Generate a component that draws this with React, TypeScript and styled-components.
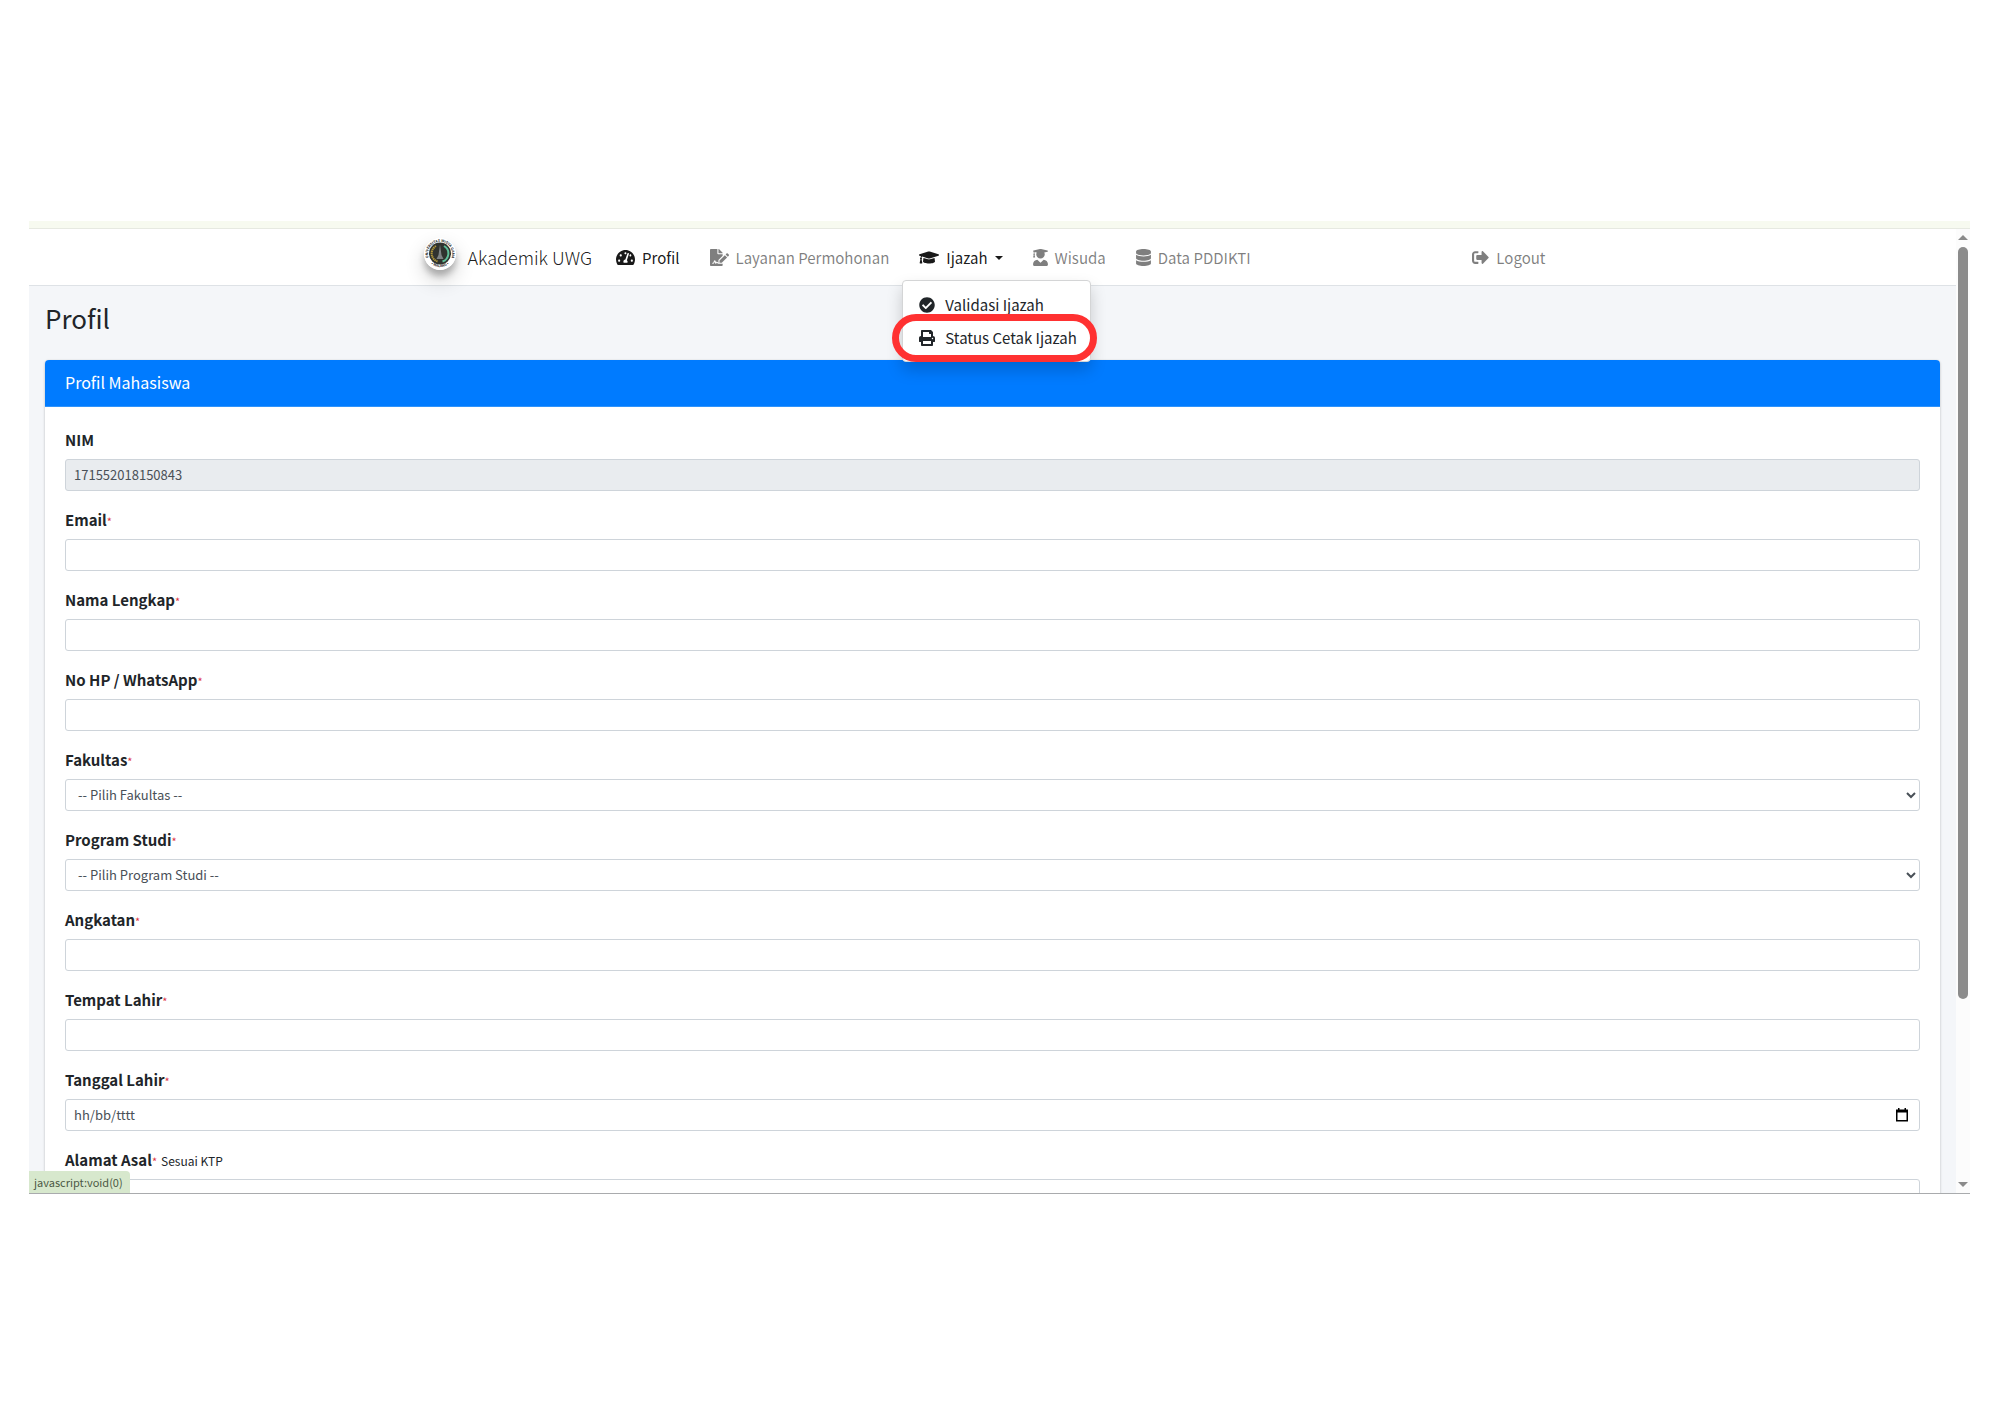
import React from "react";
import styled, { createGlobalStyle, css } from "styled-components";
import {
  FaTachometerAlt,
  FaFileSignature,
  FaGraduationCap,
  FaUserGraduate,
  FaDatabase,
  FaSignOutAlt,
  FaCheckCircle,
  FaPrint,
} from "react-icons/fa";

const GlobalStyle = createGlobalStyle`
  *, *::before, *::after { box-sizing: border-box; }
  body {
    margin: 0;
    background: #fff;
    color: #212529;
    font-family: "Noto Sans CJK JP", "Noto Sans", sans-serif;
    font-size: 15px;
    line-height: 24px;
  }
`;

const Screen = styled.div`
  display: flex;
  flex-direction: column;
  height: 100vh;
  padding: 221px 30px 220px 29px;
`;

const BrowserWindow = styled.div`
  position: relative;
  flex: 1;
  min-height: 0;
  display: flex;
  flex-direction: column;
  border-bottom: 1px solid #a9abad;
`;

const TabStrip = styled.div`
  flex: none;
  height: 8px;
  background: #f7faf0;
  border-bottom: 1px solid #e6e9e1;
`;

const Viewport = styled.div`
  flex: 1;
  min-height: 0;
  display: flex;
`;

const Page = styled.div`
  flex: 1;
  min-width: 0;
  overflow: hidden;
  background: #f4f6f9;
`;

const ScrollTrack = styled.div`
  flex: none;
  width: 14px;
  padding: 6px 0;
  display: flex;
  flex-direction: column;
  align-items: center;
  gap: 7px;
  background: #fcfcfc;
`;

const ScrollArrow = styled.span<{ $down?: boolean }>`
  border: 5px solid transparent;
  ${(p) =>
    p.$down
      ? css`border-top-color: #8b8b8b; border-bottom: 0; margin-top: auto;`
      : css`border-bottom-color: #8b8b8b; border-top: 0;`}
`;

const ScrollThumb = styled.span`
  width: 10px;
  height: 79%;
  border-radius: 5px;
  background: #8b8b8b;
`;

const Navbar = styled.header`
  height: 57px;
  background: #fff;
  border-bottom: 1px solid #dee2e6;
`;

const NavContainer = styled.div`
  max-width: 1162px;
  height: 100%;
  margin: 0 auto;
  padding: 0 28px 0 12px;
  display: flex;
  align-items: center;
`;

const Brand = styled.a`
  display: flex;
  align-items: center;
  gap: 12px;
  margin-right: 24px;
  color: rgba(0, 0, 0, 0.9);
  font-size: 18px;
  font-weight: 300;
  text-decoration: none;
`;

const LogoMark = styled.svg`
  width: 32px;
  height: 32px;
  margin-bottom: 6px;
  border-radius: 50%;
  box-shadow: 0 10px 20px rgba(0, 0, 0, 0.19), 0 6px 6px rgba(0, 0, 0, 0.23);
`;

const NavList = styled.nav`
  flex: 1;
  display: flex;
  align-items: center;
  gap: 30px;
  padding-top: 1px;
`;

const NavLink = styled.a<{ $icon: number; $active?: boolean; $end?: boolean }>`
  display: flex;
  align-items: center;
  gap: 7px;
  color: ${(p) => (p.$active ? "rgba(0, 0, 0, 0.9)" : "rgba(0, 0, 0, 0.5)")};
  text-decoration: none;
  white-space: nowrap;
  ${(p) => p.$end && css`margin-left: auto;`}
  svg { flex: none; width: ${(p) => p.$icon}px; height: 17px; }
`;

const Caret = styled.span`
  border: 4px solid transparent;
  border-top-color: currentColor;
  border-bottom: 0;
`;

const Dropdown = styled.div`
  position: relative;
`;

const Menu = styled.div`
  position: absolute;
  z-index: 2;
  top: 34px;
  left: -17px;
  width: 189px;
  padding: 8px 0 6px;
  background: #fff;
  border: 1px solid #d4d5d6;
  border-radius: 4px;
  box-shadow: 0 8px 16px rgba(0, 0, 0, 0.18);
`;

const MenuItem = styled.a`
  display: flex;
  align-items: center;
  gap: 10px;
  height: 33px;
  padding: 0 16px;
  color: #212529;
  text-decoration: none;
  white-space: nowrap;
  svg { flex: none; width: 16px; height: 16px; }
`;

const Highlight = styled.span`
  position: absolute;
  inset: 33px -7px -1px -11px;
  border: 7px solid #ff3131;
  border-radius: 24px;
  pointer-events: none;
`;

const Content = styled.main`
  padding: 14px 16px;
`;

const PageTitle = styled.h1`
  margin: 0 0 24px;
  font-size: 26px;
  font-weight: 400;
  line-height: 36px;
`;

const Card = styled.section`
  background: #fff;
  border-radius: 4px;
  box-shadow: 0 0 1px rgba(0, 0, 0, 0.13), 0 1px 3px rgba(0, 0, 0, 0.2);
`;

const CardHeader = styled.div`
  padding: 11px 20px 13px;
  background: #007bff;
  border-bottom: 1px solid #2f93fb;
  border-radius: 4px 4px 0 0;
`;

const CardTitle = styled.h2`
  margin: 0;
  color: #fff;
  font-size: 16px;
  font-weight: 400;
  line-height: 22px;
`;

const Form = styled.form`
  padding: 21px 20px;
`;

const Field = styled.div`
  margin-bottom: 17px;
`;

const FieldHead = styled.div`
  display: flex;
  align-items: baseline;
  height: 24px;
  margin-bottom: 7px;
`;

const Label = styled.label`
  font-weight: 700;
`;

const Required = styled.small`
  color: #dc3545;
  font-size: 11px;
  font-weight: 400;
`;

const Hint = styled.small`
  margin-left: 4px;
  font-size: 12px;
`;

const control = css`
  display: block;
  width: 100%;
  height: 32px;
  padding: 0 8px 2px;
  border: 1px solid #ced4da;
  border-radius: 3px;
  background: #fff;
  color: #495057;
  font-family: inherit;
  font-size: 13px;
`;

const TextInput = styled.input`
  ${control}
  &:disabled { background: #e9ecef; opacity: 1; }
  &::placeholder { color: #495057; opacity: 1; }
`;

const Select = styled.select`
  ${control}
`;

const DateBox = styled.div`
  position: relative;
`;

const DateButton = styled.button`
  position: absolute;
  top: 0;
  right: 8px;
  width: 20px;
  height: 100%;
  padding: 0;
  display: grid;
  place-items: center;
  border: 0;
  background: none;
  color: #000;
`;

const StatusBubble = styled.div`
  position: absolute;
  z-index: 3;
  left: 0;
  bottom: 0;
  height: 22px;
  padding: 0 7px 0 5px;
  background: #d7e8cd;
  border-radius: 0 4px 0 0;
  color: #4c5945;
  font-size: 11px;
  line-height: 22px;
`;

const Logo = () => (
  <LogoMark viewBox="0 0 64 64" aria-hidden="true">
    <defs>
      <path id="ring" d="M17.5 51 A24 24 0 1 1 46.5 51" />
      <path id="foot" d="M8 46 A30 30 0 0 0 56 46" />
    </defs>
    <circle cx="32" cy="32" r="32" fill="#fff" />
    <text fontSize="7" fontWeight="700" fill="#222">
      <textPath href="#ring" startOffset="50%" textAnchor="middle">UNIVERSITAS WIDYA GAMA</textPath>
    </text>
    <text fontSize="7" fontWeight="700" fill="#222">
      <textPath href="#foot" startOffset="50%" textAnchor="middle">• MALANG •</textPath>
    </text>
    <circle cx="32" cy="31" r="22" fill="#30332f" />
    <path d="M24 16 A17 17 0 0 0 27 47" fill="none" stroke="#b0963a" strokeWidth="4" strokeDasharray="3 1" />
    <path d="M40 16 A17 17 0 0 1 37 47" fill="none" stroke="#5fc09a" strokeWidth="4" />
    <path d="M32 13 L35 34 L39 42 H25 L29 34 Z" fill="#7d8284" />
  </LogoMark>
);

type FieldSpec = {
  id: string;
  label: string;
  kind?: "text" | "select" | "date";
  optional?: boolean;
  value?: string;
  hint?: string;
};

const fields: FieldSpec[] = [
  { id: "nim", label: "NIM", optional: true, value: "171552018150843" },
  { id: "email", label: "Email" },
  { id: "nama", label: "Nama Lengkap" },
  { id: "hp", label: "No HP / WhatsApp" },
  { id: "fakultas", label: "Fakultas", kind: "select", value: "-- Pilih Fakultas --" },
  { id: "prodi", label: "Program Studi", kind: "select", value: "-- Pilih Program Studi --" },
  { id: "angkatan", label: "Angkatan" },
  { id: "tempat", label: "Tempat Lahir" },
  { id: "tanggal", label: "Tanggal Lahir", kind: "date" },
  { id: "alamat", label: "Alamat Asal", hint: "Sesuai KTP" },
];

const Control = ({ field }: { field: FieldSpec }) => {
  if (field.kind === "select") {
    return (
      <Select id={field.id}>
        <option>{field.value}</option>
      </Select>
    );
  }
  if (field.kind === "date") {
    return (
      <DateBox>
        <TextInput id={field.id} type="text" placeholder="hh/bb/tttt" />
        <DateButton type="button" aria-label="Pilih tanggal">
          <svg width="12" height="14" viewBox="0 0 12 14" fill="currentColor" aria-hidden="true">
            <path fillRule="evenodd" d="M2 0h1.500v1.500h5V0H10v1.500h2V13.500H0V1.500h2zM1.500 4.500V12h9V4.500z" />
          </svg>
        </DateButton>
      </DateBox>
    );
  }
  return <TextInput id={field.id} type="text" defaultValue={field.value} disabled={Boolean(field.value)} />;
};

export default function App() {
  return (
    <>
      <GlobalStyle />
      <Screen>
        <BrowserWindow>
          <TabStrip />
          <Viewport>
            <Page>
              <Navbar>
                <NavContainer>
                  <Brand href="#">
                    <Logo />
                    Akademik UWG
                  </Brand>
                  <NavList>
                    <NavLink href="#" $icon={19} $active><FaTachometerAlt />Profil</NavLink>
                    <NavLink href="#" $icon={19}><FaFileSignature />Layanan Permohonan</NavLink>
                    <Dropdown>
                      <NavLink href="#" $icon={20} $active><FaGraduationCap />Ijazah<Caret /></NavLink>
                      <Menu>
                        <MenuItem href="#"><FaCheckCircle />Validasi Ijazah</MenuItem>
                        <MenuItem href="#"><FaPrint />Status Cetak Ijazah</MenuItem>
                        <Highlight />
                      </Menu>
                    </Dropdown>
                    <NavLink href="#" $icon={15}><FaUserGraduate />Wisuda</NavLink>
                    <NavLink href="#" $icon={15}><FaDatabase />Data PDDIKTI</NavLink>
                    <NavLink href="#" $icon={17} $end><FaSignOutAlt />Logout</NavLink>
                  </NavList>
                </NavContainer>
              </Navbar>
              <Content>
                <PageTitle>Profil</PageTitle>
                <Card>
                  <CardHeader>
                    <CardTitle>Profil Mahasiswa</CardTitle>
                  </CardHeader>
                  <Form>
                    {fields.map((field) => (
                      <Field key={field.id}>
                        <FieldHead>
                          <Label htmlFor={field.id}>{field.label}</Label>
                          {!field.optional && <Required>*</Required>}
                          {field.hint && <Hint>{field.hint}</Hint>}
                        </FieldHead>
                        <Control field={field} />
                      </Field>
                    ))}
                  </Form>
                </Card>
              </Content>
            </Page>
            <ScrollTrack aria-hidden="true">
              <ScrollArrow />
              <ScrollThumb />
              <ScrollArrow $down />
            </ScrollTrack>
          </Viewport>
          <StatusBubble>javascript:void(0)</StatusBubble>
        </BrowserWindow>
      </Screen>
    </>
  );
}
